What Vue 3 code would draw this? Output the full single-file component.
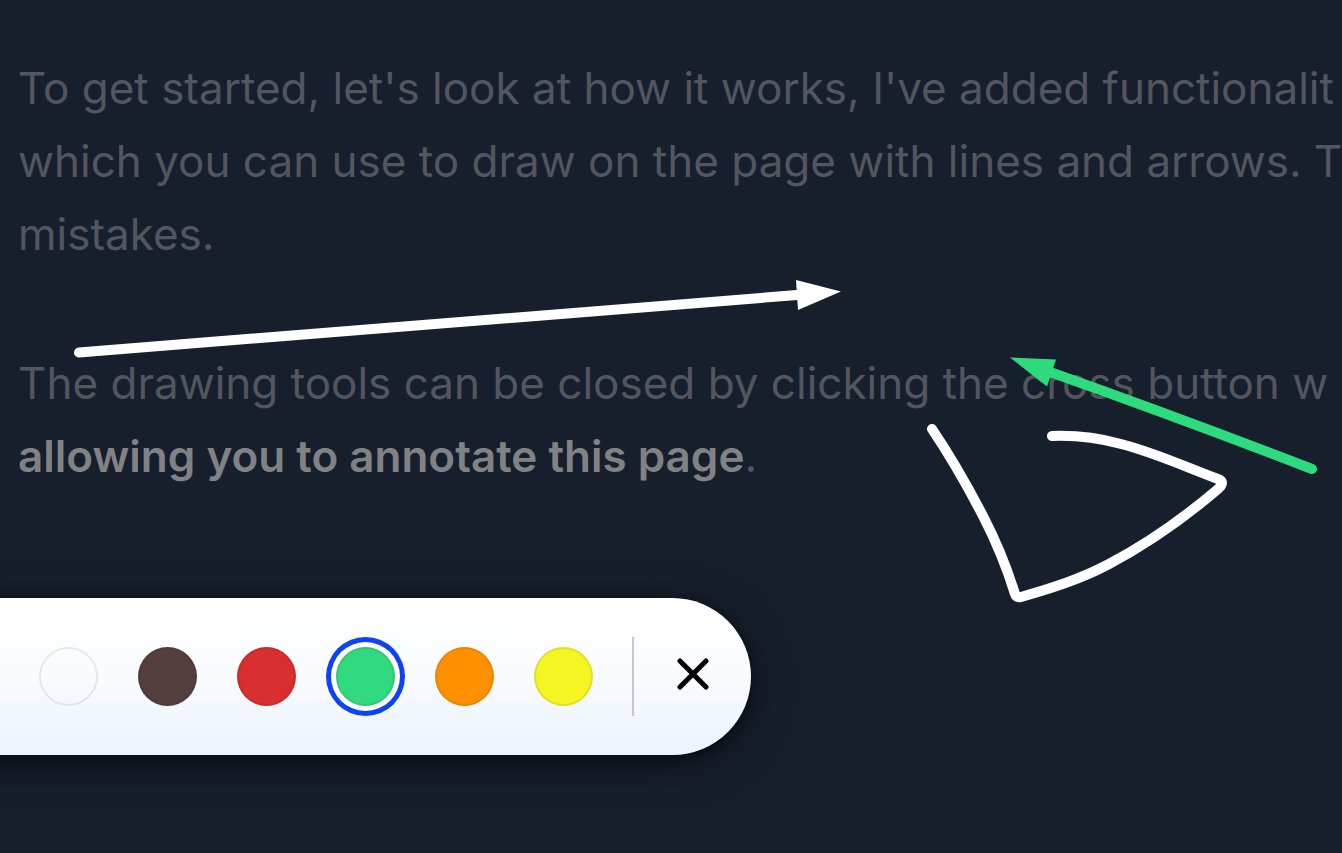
<script setup>
import { ref } from 'vue'

const colors = [
  { name: 'White', fill: 'transparent' },
  { name: 'Brown', fill: '#543f3e' },
  { name: 'Red', fill: '#d92f2f' },
  { name: 'Green', fill: '#32da7f' },
  { name: 'Orange', fill: '#ff9100' },
  { name: 'Yellow', fill: '#f5f523' },
]
const selected = ref('Green')
const open = ref(true)
</script>

<template>
  <main class="page">
    <article class="copy">
      <p>
        To get started, let's look at how it works, I've added functionalit<br />
        which you can use to draw on the page with lines and arrows. T<br />
        mistakes.
      </p>
      <p>
        The drawing tools can be closed by clicking the cross button w<br />
        <strong>allowing you to annotate this page</strong>.
      </p>
    </article>

    <svg class="canvas" aria-hidden="true">
      <g class="ink white">
        <path d="M79 352.5 L800 294.8" />
        <path class="head" d="M841 291.5 L796 280 L798 310 Z" />
        <path d="M932 429 C953 460 968 487 983 516 C997 543 1007 568 1015 594 Q1016 598 1021 597 C1052 588 1081 579 1109 564 C1147 544 1184 518 1218 489 Q1226 482 1218 479 C1186 467 1153 452 1121 444 C1099 438 1079 435 1052 436" />
      </g>
      <g class="ink green">
        <path d="M1312 469 Q1180 418 1050 372" />
        <path class="head" d="M1010 357.5 L1056 359.5 L1047 386.5 Z" />
      </g>
    </svg>

    <div v-if="open" class="toolbar" role="toolbar" aria-label="Drawing tools">
      <div class="swatches" role="radiogroup" aria-label="Colour">
        <input
          v-for="c in colors"
          :key="c.name"
          v-model="selected"
          class="swatch"
          type="radio"
          name="colour"
          :value="c.name"
          :aria-label="c.name"
          :style="{ backgroundColor: c.fill }"
        />
      </div>
      <span class="divider"></span>
      <button class="close" type="button" aria-label="Close" @click="open = false">
        <svg width="32" height="32" viewBox="0 0 32 32" aria-hidden="true">
          <path d="M3 3 L29 29 M29 3 L3 29" />
        </svg>
      </button>
    </div>
  </main>
</template>

<style>
body {
  margin: 0;
  background: #171f2d;
}
</style>

<style scoped>
.page {
  position: relative;
  box-sizing: border-box;
  min-height: 100vh;
  padding-top: 52px;
  overflow: hidden;
  background: #171f2d;
  font-family: Inter, "Liberation Sans", sans-serif;
}
.copy {
  padding-left: 18px;
  color: #52565e;
  font-size: 44px;
  font-variant-ligatures: none;
  line-height: 73px;
  white-space: nowrap;
}
.copy p {
  margin: 0 0 76px;
}
.copy p:last-child {
  margin-bottom: 105px;
}
.copy strong {
  color: #808285;
  font-weight: 600;
}
.canvas {
  position: absolute;
  inset: 0;
  width: 100%;
  height: 100%;
  pointer-events: none;
}
.ink {
  fill: none;
  stroke-width: 10;
  stroke-linecap: round;
  stroke-linejoin: round;
}
.ink .head {
  stroke: none;
}
.white {
  stroke: #fff;
}
.white .head {
  fill: #fff;
}
.green {
  stroke: #2edb7c;
}
.green .head {
  fill: #2edb7c;
}
.toolbar {
  position: relative;
  display: flex;
  align-items: center;
  box-sizing: border-box;
  width: fit-content;
  height: 157px;
  margin-left: -100px;
  padding: 0 25px 0 139px;
  border-radius: 79px;
  background: linear-gradient(#fff, #fbfcff 40%, #ecf4fe);
  box-shadow: 0 8px 40px rgba(0, 0, 0, 0.6), 0 2px 8px rgba(0, 0, 0, 0.4);
}
.swatches {
  display: flex;
  gap: 40px;
}
.swatch {
  appearance: none;
  box-sizing: border-box;
  width: 59px;
  height: 59px;
  margin: 0;
  border: 2px solid rgba(0, 0, 0, 0.08);
  border-radius: 50%;
  cursor: pointer;
}
.swatch:checked {
  box-shadow: 0 0 0 5px #fff, 0 0 0 10px #0d42f5;
}
.divider {
  width: 2px;
  height: 79px;
  margin: 0 26px 0 39px;
  background: #c6c7ca;
}
.close {
  display: grid;
  place-items: center;
  width: 66px;
  height: 66px;
  margin: 0;
  padding: 0 0 6px;
  border: 0;
  background: none;
  cursor: pointer;
}
.close path {
  fill: none;
  stroke: #000;
  stroke-width: 5;
  stroke-linecap: round;
}
</style>
